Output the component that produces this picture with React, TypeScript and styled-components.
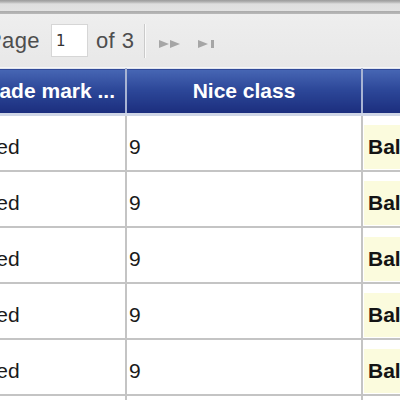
import styled, { createGlobalStyle } from "styled-components";

const GlobalStyle = createGlobalStyle`
    html, body {
        margin: 0;
        padding: 0;
        height: 400px;
        overflow: hidden;
        background: #ffffff;
        font-family: "Liberation Sans", Arial, sans-serif;
    }
`

const Viewport = styled.div`
    width: 400px;
    height: 400px;
    overflow: hidden;
`

// the grid is scrolled sideways, so the frame starts left of the window
const Frame = styled.div`
    margin-left: -94px;
    width: 720px;
`

const TopEdge = styled.div`
    height: 14px;
    background: linear-gradient(#9a9a9a 0, #b4b4b4 2px, #dedede 4px, #e2e2e2 11px, #ababab 11px, #b8b8b8 14px);
`

const Toolbar = styled.div`
    display: flex;
    align-items: center;
    height: 53px;
    padding-left: 81px;
    background: linear-gradient(#eeeeee, #e8e8e8);
    border-bottom: 1px solid #f6f6f6;
    font-size: 22px;
    color: #4e4e4e;
`

const Label = styled.span`
    margin-right: ${(p: { gap?: number }) => p.gap ?? 0}px;
    letter-spacing: 0.4px;
`

const PageInput = styled.div`
    width: 31px;
    height: 31px;
    margin-right: 8px;
    background: #ffffff;
    border: 1px solid #d6d6d6;
    box-sizing: content-box;
    display: flex;
    align-items: center;
    padding-left: 4px;
    font-size: 15px;
    color: #333333;
    font-family: "DejaVu Sans", sans-serif;
`

const Separator = styled.div`
    width: 1px;
    height: 34px;
    margin-left: 10px;
    background: #cacaca;
    border-right: 1px solid #fafafa;
`

const NavIcon = styled.svg`
    display: block;
    margin-top: 7px;
    margin-left: ${(p: { offset: number }) => p.offset}px;
    fill: #a6a6a6;
`

const Table = styled.table`
    border-collapse: collapse;
    table-layout: fixed;
    width: 720px;
`

const HeadCell = styled.th`
    height: 44px;
    padding: 0 10px;
    background: linear-gradient(#4766b4 0%, #2d4899 45%, #1b2d7d 100%);
    border-top: 1px solid #dfe4ee;
    border-right: 2px solid #a8b4d4;
    border-bottom: 3px solid #cfd6e6;
    color: #ffffff;
    font-size: 21px;
    font-weight: bold;
    white-space: nowrap;
    overflow: hidden;
    text-align: ${(p: { align?: string }) => p.align ?? "center"};
`

const Cell = styled.td`
    height: 56px;
    padding: 8px 0 0 ${(p: { pad: number }) => p.pad}px;
    box-sizing: border-box;
    border-right: 2px solid #c4c4c4;
    border-bottom: 2px solid #c4c4c4;
    font-size: 21px;
    color: #1a1a1a;
    white-space: nowrap;
    overflow: hidden;
`

const Highlight = styled.span`
    display: inline-block;
    padding: 10px 4px;
    background: #fbfbdd;
    font-weight: bold;
    color: #141414;
`

const rows = [1, 2, 3, 4, 5, 6];

const App = () => {
    return (
        <Viewport>
            <GlobalStyle />
            <Frame>
                <TopEdge />
                <Toolbar>
                    <Label gap={11}>Page</Label>
                    <PageInput>1</PageInput>
                    <Label>of 3</Label>
                    <Separator />
                    <NavIcon offset={13} width="22" height="10" viewBox="0 0 22 10">
                        <polygon points="0,1 10,5 0,9" />
                        <polygon points="11,1 21,5 11,9" />
                    </NavIcon>
                    <NavIcon offset={17} width="18" height="10" viewBox="0 0 18 10">
                        <polygon points="0,1 10,5 0,9" />
                        <rect x="13" y="1" width="3" height="8" />
                    </NavIcon>
                </Toolbar>
                <Table>
                    <colgroup>
                        <col style={{ width: 220 }} />
                        <col style={{ width: 236 }} />
                        <col style={{ width: 264 }} />
                    </colgroup>
                    <thead>
                        <tr>
                            <HeadCell align="right">Trade mark ...</HeadCell>
                            <HeadCell>Nice class</HeadCell>
                            <HeadCell>Applicant</HeadCell>
                        </tr>
                    </thead>
                    <tbody>
                        {rows.map((r) => (
                            <tr key={r}>
                                <Cell pad={12}>Registered</Cell>
                                <Cell pad={2}>9</Cell>
                                <Cell pad={1}>
                                    <Highlight>Balance</Highlight>
                                </Cell>
                            </tr>
                        ))}
                    </tbody>
                </Table>
            </Frame>
        </Viewport>
    );
}

export default App;
